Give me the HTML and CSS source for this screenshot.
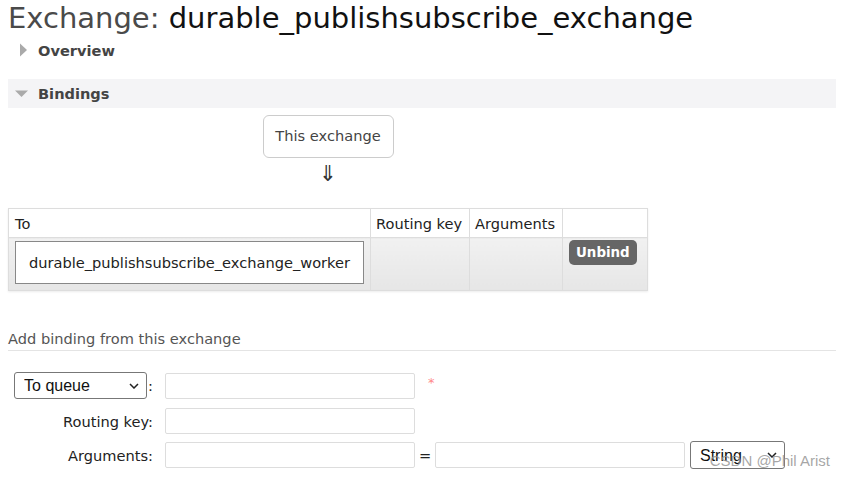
FILE: index.html
```html
<!DOCTYPE html>
<html lang="en">
<head>
    <meta charset="UTF-8">
    <title>Exchange: durable_publishsubscribe_exchange</title>
    <link rel="stylesheet" href="styles.css">
</head>
<body>
    <h1 class="page-title"><span class="title-label">Exchange:</span> durable_publishsubscribe_exchange</h1>

    <div class="section">
        <h2 class="section-head">
            <svg class="toggle" width="16" height="14" viewBox="0 0 16 14"><path d="M6 0.5 L13 7 L6 13.5 Z" fill="#aaa"/></svg>
            Overview
        </h2>
    </div>

    <div class="section section-open">
        <h2 class="section-head">
            <svg class="toggle" width="16" height="14" viewBox="0 0 16 14"><path d="M1 3.5 L14 3.5 L7.5 10 Z" fill="#aaa"/></svg>
            Bindings
        </h2>
        <div class="section-body">
            <div class="bindings">
                <div class="this-exchange">This exchange</div>
                <div class="down-arrow">&#8659;</div>
                <table class="list">
                    <thead>
                        <tr>
                            <th class="col-to">To</th>
                            <th class="col-key">Routing key</th>
                            <th class="col-args">Arguments</th>
                            <th class="col-action"></th>
                        </tr>
                    </thead>
                    <tbody>
                        <tr>
                            <td class="col-to"><span class="dest">durable_publishsubscribe_exchange_worker</span></td>
                            <td></td>
                            <td></td>
                            <td class="col-action"><button type="button" class="btn-unbind">Unbind</button></td>
                        </tr>
                    </tbody>
                </table>
            </div>

            <h3 class="sub-title">Add binding from this exchange</h3>

            <form class="binding-form">
                <div class="form-row">
                    <div class="form-label">
                        <span class="select-wrap select-dest">
                            <select>
                                <option>To queue</option>
                                <option>To exchange</option>
                            </select>
                            <svg class="chevron" width="10" height="6" viewBox="0 0 10 6"><path d="M1 1 L5 5 L9 1" fill="none" stroke="#222" stroke-width="1.5"/></svg>
                        </span>:
                    </div>
                    <input type="text" class="form-input">
                    <span class="mand">*</span>
                </div>
                <div class="form-row">
                    <label class="form-label">Routing key:</label>
                    <input type="text" class="form-input">
                </div>
                <div class="form-row">
                    <label class="form-label">Arguments:</label>
                    <input type="text" class="form-input">
                    <span class="equals">=</span>
                    <input type="text" class="form-input">
                    <span class="select-wrap select-type">
                        <select>
                            <option>String</option>
                            <option>Number</option>
                            <option>Boolean</option>
                        </select>
                        <svg class="chevron" width="10" height="6" viewBox="0 0 10 6"><path d="M1 1 L5 5 L9 1" fill="none" stroke="#222" stroke-width="1.5"/></svg>
                    </span>
                </div>
            </form>
        </div>
    </div>

    <div class="watermark">CSDN @Phil Arist</div>
</body>
</html>
```

FILE: styles.css
```css
* {
    margin: 0;
    padding: 0;
    box-sizing: border-box;
}

body {
    font-family: Verdana, 'DejaVu Sans', sans-serif;
    font-size: 14.6px;
    color: #444;
    background-color: #fff;
    padding: 0 9px 0 8px;
    width: 845px;
    height: 478px;
    overflow: hidden;
    position: relative;
}

.page-title {
    font-size: 29px;
    font-weight: normal;
    line-height: 37px;
    color: #111;
}

.title-label {
    color: #4a4a4a;
}

.section-head {
    display: flex;
    align-items: center;
    font-size: 14.6px;
    font-weight: bold;
    color: #444;
    height: 26px;
}

.toggle {
    margin: 0 8px 0 6px;
}

.section {
    margin-bottom: 16px;
}

.section-open .section-head {
    height: 29px;
    background-color: #f4f4f6;
}

.section-body {
    padding-top: 7px;
}

.bindings {
    width: 640px;
    display: flex;
    flex-direction: column;
    align-items: center;
}

.this-exchange {
    border: 1px solid #ccc;
    border-radius: 6px;
    padding: 10px 0 11px;
    line-height: 20px;
    color: #444;
    width: 131px;
    text-align: center;
    background-color: #fff;
}

.down-arrow {
    font-size: 22px;
    line-height: 28px;
    color: #333;
    margin: 2px 0 20px;
}

.list {
    width: 640px;
    table-layout: fixed;
    border-collapse: collapse;
    border: 1px solid #ccc;
    box-shadow: 0 1px 2px rgba(0, 0, 0, 0.08);
}

.list th {
    font-weight: normal;
    text-align: left;
    color: #222;
    height: 29px;
    padding: 0 5px;
    border: 1px solid #ddd;
    background-color: #fff;
    white-space: nowrap;
    overflow: hidden;
}

.list th.col-to {
    padding-left: 6px;
}

.list .col-to {
    width: 362px;
}

.list .col-key {
    width: 99px;
}

.list .col-args {
    width: 93px;
}

.list td {
    height: 53px;
    padding: 2px 6px;
    vertical-align: top;
    border: 1px solid #ddd;
    background: linear-gradient(#f1f1f1, #e6e6e6);
}

.list td.col-to {
    padding: 3px 6px 6px;
}

.dest {
    display: block;
    background-color: #fff;
    border: 1px solid #888;
    padding: 0 13px;
    line-height: 41px;
    color: #222;
    white-space: nowrap;
}

.btn-unbind {
    font-family: inherit;
    font-size: 13.4px;
    font-weight: bold;
    color: #fff;
    background-color: #666;
    border: none;
    border-radius: 5px;
    padding: 0 7px;
    height: 25px;
}

.sub-title {
    font-size: 14.6px;
    font-weight: normal;
    line-height: 18px;
    color: #555;
    margin-top: 39px;
    padding-bottom: 2px;
    border-bottom: 1px solid #e4e4e4;
}

.binding-form {
    padding-top: 21px;
}

.form-row {
    display: flex;
    align-items: center;
    margin-bottom: 7px;
}

.form-row:first-child {
    margin-bottom: 9px;
}

.form-label {
    width: 145px;
    margin-right: 12px;
    color: #222;
    display: flex;
    align-items: center;
    justify-content: flex-end;
    gap: 1px;
}

.form-input {
    width: 250px;
    height: 26px;
    border: 1px solid #ddd;
    border-radius: 2px;
    background-color: #fff;
}

.select-wrap {
    position: relative;
    display: inline-block;
}

.select-wrap select {
    appearance: none;
    -webkit-appearance: none;
    width: 100%;
    height: 100%;
    font-family: 'Liberation Sans', Arial, sans-serif;
    font-size: 16px;
    color: #111;
    border: 1px solid #777;
    border-radius: 3px;
    background-color: #fff;
    padding: 0 9px;
}

.chevron {
    position: absolute;
    right: 8px;
    top: 50%;
    margin-top: -3px;
    pointer-events: none;
}

.select-dest {
    width: 133px;
    height: 27px;
}

.select-type {
    width: 95px;
    height: 28px;
    margin-left: 5px;
}

.mand {
    color: #f88;
    font-size: 13px;
    margin-left: 13px;
    margin-top: -6px;
}

.equals {
    width: 20px;
    text-align: center;
    color: #222;
}

.watermark {
    position: absolute;
    right: 15px;
    bottom: 9px;
    font-family: 'Liberation Sans', Arial, sans-serif;
    font-size: 15px;
    color: rgba(150, 150, 150, 0.85);
}
```
